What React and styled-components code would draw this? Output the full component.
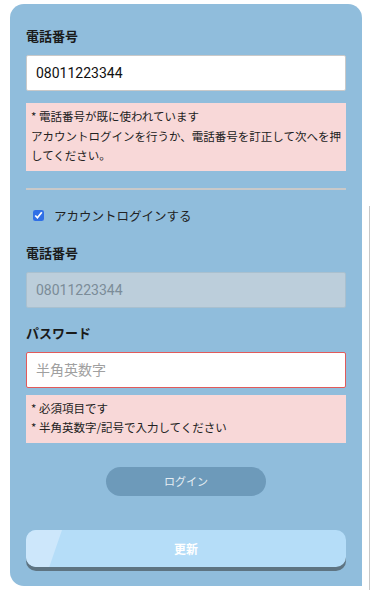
import React from 'react';
import styled, { createGlobalStyle } from 'styled-components';

const GlobalStyle = createGlobalStyle`
  html, body {
    margin: 0;
    padding: 0;
    background: #fff;
    font-family: Roboto, "Noto Sans CJK JP", sans-serif;
  }
`;

const Page = styled.div`
  padding: 4px 9px 4px 10px;
  position: relative;
`;

const ScrollTrack = styled.div`
  position: absolute;
  right: 1px;
  top: 206px;
  bottom: 0;
  width: 1px;
  background: #c8c8c8;
`;

const Card = styled.form`
  background: #90bddc;
  border-radius: 14px 14px 0 14px;
  padding: 24px 16px 19px;
  display: flex;
  flex-direction: column;
`;

const Label = styled.div`
  font-size: 13px;
  font-weight: 700;
  color: #1a1a1a;
  line-height: 18px;
  margin-bottom: 9px;
  margin-top: ${p => p.$top || 0}px;
`;

const Input = styled.input`
  box-sizing: border-box;
  width: 100%;
  height: 36px;
  margin: 0;
  padding: 0 9px;
  font-family: Roboto, "Noto Sans CJK JP", sans-serif;
  font-size: 14px;
  color: #111;
  background: ${p => (p.disabled ? '#bccedb' : '#fff')};
  border: 1px solid ${p => (p.$error ? '#e25a5a' : p.disabled ? '#a9c0cf' : '#c9c9c9')};
  border-radius: 2px;
  outline: none;
  &:disabled {
    color: #7b8c98;
  }
  &::placeholder {
    color: #a0a0a0;
  }
`;

const ErrorBox = styled.div`
  background: #f8d8d8;
  margin-top: ${p => p.$top || 0}px;
  padding: 4px 4px 5px 5px;
  font-size: 11.5px;
  line-height: 19.5px;
  color: #222;
  font-family: "Noto Sans CJK JP", sans-serif;
`;

const Divider = styled.hr`
  border: none;
  height: 2px;
  background: #c9c9c9;
  margin: 17px 0 0;
`;

const CheckRow = styled.label`
  display: flex;
  align-items: center;
  gap: 10px;
  margin: 17px 0 0 7px;
  font-size: 12.5px;
  line-height: 18px;
  color: #222;
  font-family: "Noto Sans CJK JP", sans-serif;
  input {
    margin: 0;
    width: 11px;
    height: 11px;
    accent-color: #2f6fe6;
  }
`;

const Center = styled.div`
  display: flex;
  justify-content: center;
  margin-top: 24px;
`;

const LoginButton = styled.button`
  width: 160px;
  height: 29px;
  border: none;
  border-radius: 15px;
  background: #6d9aba;
  color: #e6eef4;
  font-family: "Noto Sans CJK JP", sans-serif;
  font-size: 11px;
  padding: 0;
`;

const UpdateButton = styled.button`
  position: relative;
  overflow: hidden;
  margin-top: 34px;
  height: 37px;
  border: none;
  border-radius: 10px;
  background: #b5ddf8;
  box-shadow: 0 4px 0 #5e7482;
  color: #fff;
  font-family: "Noto Sans CJK JP", sans-serif;
  font-size: 12px;
  font-weight: 700;
  padding: 0;
`;

const Shine = styled.span`
  position: absolute;
  left: -20px;
  top: 0;
  bottom: 0;
  width: 56px;
  background: #cde7fb;
  transform: skewX(-19deg);
  transform-origin: top left;
`;

const ButtonText = styled.span`
  position: relative;
`;

export default function App() {
  return (
    <Page>
      <GlobalStyle />
      <Card onSubmit={e => e.preventDefault()}>
        <Label>電話番号</Label>
        <Input defaultValue="08011223344" />
        <ErrorBox $top={12}>
          * 電話番号が既に使われています
          <br />
          アカウントログインを行うか、電話番号を訂正して次へを押してください。
        </ErrorBox>
        <Divider />
        <CheckRow>
          <input type="checkbox" defaultChecked />
          アカウントログインする
        </CheckRow>
        <Label $top={20}>電話番号</Label>
        <Input disabled value="08011223344" readOnly />
        <Label $top={17}>パスワード</Label>
        <Input $error placeholder="半角英数字" type="text" />
        <ErrorBox $top={7}>
          * 必須項目です
          <br />* 半角英数字/記号で入力してください
        </ErrorBox>
        <Center>
          <LoginButton type="button">ログイン</LoginButton>
        </Center>
        <UpdateButton type="submit">
          <Shine />
          <ButtonText>更新</ButtonText>
        </UpdateButton>
      </Card>
      <ScrollTrack />
    </Page>
  );
}
